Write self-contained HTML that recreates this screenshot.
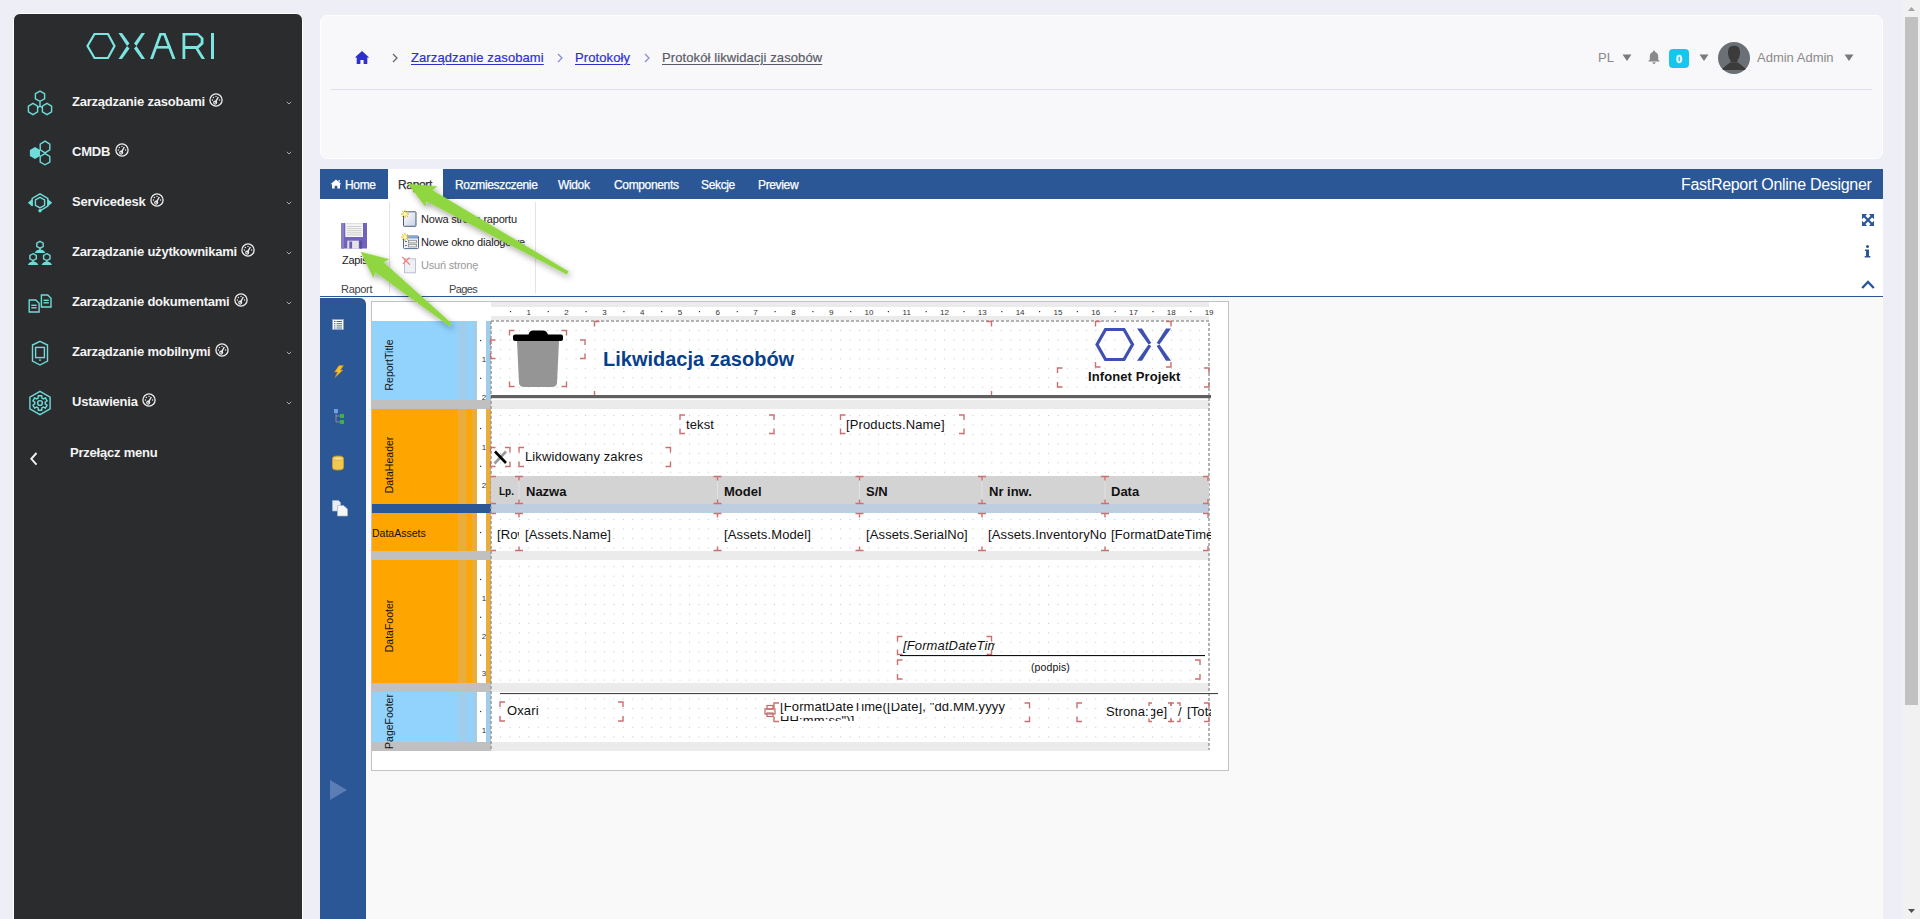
<!DOCTYPE html>
<html><head><meta charset="utf-8">
<style>
*{margin:0;padding:0;box-sizing:border-box}
html,body{width:1920px;height:919px;overflow:hidden;background:#eeeef7;font-family:"Liberation Sans",sans-serif;position:relative}
.a{position:absolute}
.t{position:absolute;white-space:nowrap;line-height:1}
#sb{left:13px;top:13px;width:290px;height:920px;background:#2b2c2e;border:1px solid #fff;border-radius:7px 7px 0 0}
.mi{position:absolute;left:72px;color:#f4f4f4;font-weight:bold;font-size:13px;letter-spacing:-0.22px}
.g{position:relative;top:-2px;margin-left:1px;vertical-align:top}
.chev{position:absolute;left:286px;width:6px;height:4px}
#hdr{left:320px;top:15px;width:1563px;height:144px;background:#f8f8fa;border:1px solid #fff;border-radius:7px}
.bc{font-size:13px;text-decoration:underline;text-underline-offset:2px;letter-spacing:0.1px;-webkit-text-stroke-width:0.2px}
.hr{font-size:13px;color:#8a8a8a}
#sbar{left:1903px;top:0;width:17px;height:919px;background:#f1f1f1}
#thumb{left:1905px;top:17px;width:13px;height:688px;background:#c1c1c1}
#tabs{left:320px;top:169px;width:1563px;height:30px;background:#2b5797}
.tab{position:absolute;top:179px;color:#fff;font-size:12px;letter-spacing:-0.35px;-webkit-text-stroke-width:0.25px}
#ribbon{left:320px;top:199px;width:1563px;height:98px;background:#fff;border-bottom:1px solid #2b5797}
.rb{position:absolute;font-size:11px;color:#222;white-space:nowrap;line-height:1}
#dbg{left:320px;top:297px;width:1563px;height:622px;background:#f9f9f9}
#vtb{left:320px;top:298px;width:46px;height:622px;background:#2b5797;border-radius:0 6px 0 0}
#page{left:371px;top:301px;width:858px;height:470px;background:#fff;border:1px solid #c8c8c8}
.rn{font-size:8px;fill:#333;font-family:"Liberation Sans",sans-serif}
.bl{font-size:10.5px;fill:#111;font-family:"Liberation Sans",sans-serif}
.brk{fill:none;stroke:#cc6f6f;stroke-width:1.4}
.rt{font-size:13px;color:#111;letter-spacing:0.12px}
.hb{top:485px;font-weight:bold;letter-spacing:0}
.dr{top:528px}
</style></head><body>

<!-- sidebar -->
<div id="sb" class="a"></div>
<!-- logo -->
<svg class="a" style="left:0;top:0" width="302" height="70" viewBox="0 0 302 70">
 <g fill="none" stroke="#7ae6e2" stroke-width="2.2">
  <polygon points="87.5,46 94.5,34 108,34 114.5,46 108,58 94.5,58"/>
 </g>
 <g fill="#7ae6e2">
  <polygon points="118.5,33 122,33 129.5,43.5 127,46 "/>
  <polygon points="118.5,59 122,59 129.5,48.5 127,46 "/>
  <polygon points="145,33 141.5,33 134,43.5 136.5,46 "/>
  <polygon points="145,59 141.5,59 134,48.5 136.5,46 "/>
  <polygon points="150,59 159.5,33 165.5,33 175.5,59 172.5,59 163.5,35.5 161.5,35.5 153,59"/>
  <rect x="155.5" y="46" width="15" height="2.6"/>
  <path d="M182.5,33 h15.5 l5.5,5 v6 l-5,4.5 l6.5,10.5 h-3.3 l-6.2,-10 h-10.2 v10 h-2.8 z M185.3,35.6 v10.3 h11.8 l3.6,-3.3 v-4.1 l-3.3,-2.9 z"/>
  <rect x="211" y="33" width="3" height="26"/>
 </g>
</svg>
<!-- menu icons --><!--ICONS--><svg class="a" style="left:0;top:80px" width="70" height="400" viewBox="0 80 70 400">
 <g fill="none" stroke="#6edcd8" stroke-width="1.4">
  <polygon points="40,91.10000000000001 44.6,93.65 44.6,98.75 40,101.3 35.4,98.75 35.4,93.65"/>
  <polygon points="33,103.4 37.6,106.2 37.6,111.8 33,114.6 28.4,111.8 28.4,106.2"/>
  <polygon points="47,103.4 51.6,106.2 51.6,111.8 47,114.6 42.4,111.8 42.4,106.2"/>
  <path d="M40,101.3 V106.2 L37.6,107.6 M40,106.2 L42.4,107.6"/>
  <polygon points="45,141.1 49.8,144.05 49.8,149.95 45,152.9 40.2,149.95 40.2,144.05"/>
  <polygon points="45,153.6 49.8,156.39999999999998 49.8,162.0 45,164.79999999999998 40.2,162.0 40.2,156.39999999999998"/>
  <polygon points="40,197.29999999999998 44.6,199.95 44.6,205.25 40,207.9 35.4,205.25 35.4,199.95"/>
  <path d="M32.2,206 V198.5 L40,193.8 L47.8,198.5 V206.2 L40,210.8"/>
  <polygon points="40,241.4 43.2,243.10000000000002 43.2,246.5 40,248.20000000000002 36.8,246.5 36.8,243.10000000000002"/>
  <polygon points="33.1,253.70000000000002 36.300000000000004,255.40000000000003 36.300000000000004,258.8 33.1,260.5 29.900000000000002,258.8 29.900000000000002,255.40000000000003"/>
  <polygon points="46.8,253.70000000000002 50.0,255.40000000000003 50.0,258.8 46.8,260.5 43.599999999999994,258.8 43.599999999999994,255.40000000000003"/>
  <path d="M29.2,300 h6.5 l3.4,3.2 v8.8 h-9.9 z"/>
  <path d="M41.4,295 h6.3 l3.3,3.2 v8.8 h-9.6 z"/>
  <line x1="31.3" y1="305.3" x2="36.6" y2="305.3"/><line x1="31.3" y1="307.8" x2="36.6" y2="307.8"/>
  <line x1="43.5" y1="300.3" x2="48.8" y2="300.3"/><line x1="43.5" y1="302.8" x2="48.8" y2="302.8"/>
  <polygon points="40,341.3 47.5,345 47.5,361 40,365 32.5,361 32.5,345"/>
  <rect x="35.6" y="347.4" width="8.8" height="10.2"/>
  <polygon points="40,391.4 50.1,397.2 50.1,408.8 40,414.6 29.9,408.8 29.9,397.2"/>
  <path d="M41.88,398.05 L41.66,395.79 L38.34,395.79 L38.12,398.05 L36.65,398.89 L34.59,397.95 L32.92,400.84 L34.77,402.15 L34.77,403.85 L32.92,405.16 L34.59,408.05 L36.65,407.11 L38.12,407.95 L38.34,410.21 L41.66,410.21 L41.88,407.95 L43.35,407.11 L45.41,408.05 L47.08,405.16 L45.23,403.85 L45.23,402.15 L47.08,400.84 L45.41,397.95 L43.35,398.89Z"/>
  <circle cx="40" cy="403" r="2.4"/>
 </g>
 <g fill="#6edcd8">
  <polygon points="35,146.9 40.1,149.95 40.1,156.05 35,159.1 29.9,156.05 29.9,149.95"/>
  <polygon points="27.8,202.8 32.2,199 32.2,206.6"/><polygon points="52.2,202.8 47.8,199 47.8,206.6"/>
  <circle cx="40" cy="210.8" r="1.7"/>
  <path d="M34.7,253 Q36,249.5 40,249.5 Q44,249.5 45.3,253 Z"/><rect x="39.3" y="248" width="1.4" height="2"/>
  <path d="M27.9,265 Q29.2,261.4 33.1,261.4 Q37,261.4 38.3,265 Z"/><rect x="32.4" y="260.3" width="1.4" height="2"/>
  <path d="M41.6,265 Q42.9,261.4 46.8,261.4 Q50.7,261.4 52,265 Z"/><rect x="46.1" y="260.3" width="1.4" height="2"/>
  <rect x="39" y="359.5" width="2" height="1.2"/>
 </g>
</svg><!--/ICONS-->
<div class="mi t" style="top:95px">Zarządzanie zasobami <svg class="g" width="14" height="14" viewBox="0 0 14 14"><circle cx="7" cy="7" r="6.1" fill="none" stroke="#eee" stroke-width="1.3"/><path d="M6.2,9.6 L9.3,4" stroke="#eee" stroke-width="1.4"/><circle cx="6.2" cy="9.6" r="1.5" fill="none" stroke="#eee" stroke-width="1.1"/><circle cx="7" cy="3.4" r=".7" fill="#eee"/><circle cx="4.4" cy="4.5" r=".7" fill="#eee"/><circle cx="3.4" cy="7" r=".7" fill="#eee"/><circle cx="10.6" cy="7" r=".7" fill="#eee"/></svg></div>
<div class="mi t" style="top:145px">CMDB <svg class="g" width="14" height="14" viewBox="0 0 14 14"><circle cx="7" cy="7" r="6.1" fill="none" stroke="#eee" stroke-width="1.3"/><path d="M6.2,9.6 L9.3,4" stroke="#eee" stroke-width="1.4"/><circle cx="6.2" cy="9.6" r="1.5" fill="none" stroke="#eee" stroke-width="1.1"/><circle cx="7" cy="3.4" r=".7" fill="#eee"/><circle cx="4.4" cy="4.5" r=".7" fill="#eee"/><circle cx="3.4" cy="7" r=".7" fill="#eee"/><circle cx="10.6" cy="7" r=".7" fill="#eee"/></svg></div>
<div class="mi t" style="top:195px">Servicedesk <svg class="g" width="14" height="14" viewBox="0 0 14 14"><circle cx="7" cy="7" r="6.1" fill="none" stroke="#eee" stroke-width="1.3"/><path d="M6.2,9.6 L9.3,4" stroke="#eee" stroke-width="1.4"/><circle cx="6.2" cy="9.6" r="1.5" fill="none" stroke="#eee" stroke-width="1.1"/><circle cx="7" cy="3.4" r=".7" fill="#eee"/><circle cx="4.4" cy="4.5" r=".7" fill="#eee"/><circle cx="3.4" cy="7" r=".7" fill="#eee"/><circle cx="10.6" cy="7" r=".7" fill="#eee"/></svg></div>
<div class="mi t" style="top:245px">Zarządzanie użytkownikami <svg class="g" width="14" height="14" viewBox="0 0 14 14"><circle cx="7" cy="7" r="6.1" fill="none" stroke="#eee" stroke-width="1.3"/><path d="M6.2,9.6 L9.3,4" stroke="#eee" stroke-width="1.4"/><circle cx="6.2" cy="9.6" r="1.5" fill="none" stroke="#eee" stroke-width="1.1"/><circle cx="7" cy="3.4" r=".7" fill="#eee"/><circle cx="4.4" cy="4.5" r=".7" fill="#eee"/><circle cx="3.4" cy="7" r=".7" fill="#eee"/><circle cx="10.6" cy="7" r=".7" fill="#eee"/></svg></div>
<div class="mi t" style="top:295px">Zarządzanie dokumentami <svg class="g" width="14" height="14" viewBox="0 0 14 14"><circle cx="7" cy="7" r="6.1" fill="none" stroke="#eee" stroke-width="1.3"/><path d="M6.2,9.6 L9.3,4" stroke="#eee" stroke-width="1.4"/><circle cx="6.2" cy="9.6" r="1.5" fill="none" stroke="#eee" stroke-width="1.1"/><circle cx="7" cy="3.4" r=".7" fill="#eee"/><circle cx="4.4" cy="4.5" r=".7" fill="#eee"/><circle cx="3.4" cy="7" r=".7" fill="#eee"/><circle cx="10.6" cy="7" r=".7" fill="#eee"/></svg></div>
<div class="mi t" style="top:345px">Zarządzanie mobilnymi <svg class="g" width="14" height="14" viewBox="0 0 14 14"><circle cx="7" cy="7" r="6.1" fill="none" stroke="#eee" stroke-width="1.3"/><path d="M6.2,9.6 L9.3,4" stroke="#eee" stroke-width="1.4"/><circle cx="6.2" cy="9.6" r="1.5" fill="none" stroke="#eee" stroke-width="1.1"/><circle cx="7" cy="3.4" r=".7" fill="#eee"/><circle cx="4.4" cy="4.5" r=".7" fill="#eee"/><circle cx="3.4" cy="7" r=".7" fill="#eee"/><circle cx="10.6" cy="7" r=".7" fill="#eee"/></svg></div>
<div class="mi t" style="top:395px">Ustawienia <svg class="g" width="14" height="14" viewBox="0 0 14 14"><circle cx="7" cy="7" r="6.1" fill="none" stroke="#eee" stroke-width="1.3"/><path d="M6.2,9.6 L9.3,4" stroke="#eee" stroke-width="1.4"/><circle cx="6.2" cy="9.6" r="1.5" fill="none" stroke="#eee" stroke-width="1.1"/><circle cx="7" cy="3.4" r=".7" fill="#eee"/><circle cx="4.4" cy="4.5" r=".7" fill="#eee"/><circle cx="3.4" cy="7" r=".7" fill="#eee"/><circle cx="10.6" cy="7" r=".7" fill="#eee"/></svg></div>
<div class="mi t" style="top:446px;left:70px">Przełącz menu</div>
<svg class="a" style="left:28px;top:450px" width="12" height="18" viewBox="0 0 12 18"><path d="M8.5,3 L3.3,8.8 L8.5,14.6" fill="none" stroke="#f4f4f4" stroke-width="1.9"/></svg>
<div id="gauges"></div>
<svg class="chev" style="top:101px" viewBox="0 0 6 4"><path d="M0.8,0.8 L3,3 L5.2,0.8" fill="none" stroke="#aaa" stroke-width="1"/></svg>
<svg class="chev" style="top:151px" viewBox="0 0 6 4"><path d="M0.8,0.8 L3,3 L5.2,0.8" fill="none" stroke="#aaa" stroke-width="1"/></svg>
<svg class="chev" style="top:201px" viewBox="0 0 6 4"><path d="M0.8,0.8 L3,3 L5.2,0.8" fill="none" stroke="#aaa" stroke-width="1"/></svg>
<svg class="chev" style="top:251px" viewBox="0 0 6 4"><path d="M0.8,0.8 L3,3 L5.2,0.8" fill="none" stroke="#aaa" stroke-width="1"/></svg>
<svg class="chev" style="top:301px" viewBox="0 0 6 4"><path d="M0.8,0.8 L3,3 L5.2,0.8" fill="none" stroke="#aaa" stroke-width="1"/></svg>
<svg class="chev" style="top:351px" viewBox="0 0 6 4"><path d="M0.8,0.8 L3,3 L5.2,0.8" fill="none" stroke="#aaa" stroke-width="1"/></svg>
<svg class="chev" style="top:401px" viewBox="0 0 6 4"><path d="M0.8,0.8 L3,3 L5.2,0.8" fill="none" stroke="#aaa" stroke-width="1"/></svg>


<!-- header card -->
<div id="hdr" class="a"></div>
<div class="a" style="left:331px;top:89px;width:1541px;height:1px;background:#dde0e8"></div>
<svg class="a" style="left:354px;top:50px" width="16" height="15" viewBox="0 0 16 15"><path d="M8,1 L15.2,7.6 L13.3,7.6 L13.3,14 L9.6,14 L9.6,10 L6.4,10 L6.4,14 L2.7,14 L2.7,7.6 L0.8,7.6 Z" fill="#2d2fcf"/></svg>
<svg class="a" style="left:391px;top:53px" width="8" height="10" viewBox="0 0 8 10"><path d="M2,1 L6,5 L2,9" fill="none" stroke="#666" stroke-width="1.3"/></svg>
<div class="t bc" style="left:411px;top:51px;color:#2d2fcf">Zarządzanie zasobami</div>
<svg class="a" style="left:556px;top:53px" width="8" height="10" viewBox="0 0 8 10"><path d="M2,1 L6,5 L2,9" fill="none" stroke="#8b8bd6" stroke-width="1.3"/></svg>
<div class="t bc" style="left:575px;top:51px;color:#2d2fcf">Protokoły</div>
<svg class="a" style="left:643px;top:53px" width="8" height="10" viewBox="0 0 8 10"><path d="M2,1 L6,5 L2,9" fill="none" stroke="#8b8bd6" stroke-width="1.3"/></svg>
<div class="t bc" style="left:662px;top:51px;color:#5a5a66">Protokół likwidacji zasobów</div>

<div class="t hr" style="left:1598px;top:51px">PL</div>
<svg class="a" style="left:1622px;top:54px" width="10" height="8" viewBox="0 0 10 8"><path d="M0.5,0.5 L9.5,0.5 L5,7 Z" fill="#7a7a7a"/></svg>
<svg class="a" style="left:1647px;top:50px" width="14" height="15" viewBox="0 0 14 15"><path d="M7,0.8 C7.8,0.8 8.2,1.3 8.2,2 C10.4,2.6 11.2,4.4 11.2,6.5 L11.2,9.5 L12.8,11.5 L1.2,11.5 L2.8,9.5 L2.8,6.5 C2.8,4.4 3.6,2.6 5.8,2 C5.8,1.3 6.2,0.8 7,0.8 Z M5.5,12.3 L8.5,12.3 C8.5,13.4 7.8,14 7,14 C6.2,14 5.5,13.4 5.5,12.3Z" fill="#8a8a8a"/></svg>
<div class="a" style="left:1669px;top:49px;width:20px;height:19px;background:#17c6ec;border-radius:4px;color:#fff;font-weight:bold;font-size:11px;text-align:center;line-height:20px;-webkit-text-stroke-width:0.3px">0</div>
<svg class="a" style="left:1699px;top:54px" width="10" height="8" viewBox="0 0 10 8"><path d="M0.5,0.5 L9.5,0.5 L5,7 Z" fill="#7a7a7a"/></svg>
<svg class="a" style="left:1718px;top:42px" width="32" height="32" viewBox="0 0 32 32"><defs><clipPath id="cc"><circle cx="16" cy="16" r="16"/></clipPath></defs><circle cx="16" cy="16" r="16" fill="#6b7077"/><g clip-path="url(#cc)" fill="#3b3b3b"><path d="M16,3.8 C20.5,3.8 22,6.5 22,10.5 C22,14 21,16.5 19.5,18 L19.5,20.5 L12.5,20.5 L12.5,18 C11,16.5 10,14 10,10.5 C10,6.5 11.5,3.8 16,3.8Z"/><path d="M2.5,28 L9.5,22.5 C11,21 12.5,20.5 13,20.5 L19,20.5 C19.5,20.5 21,21 22.5,22.5 L29.5,28 Z"/></g></svg>
<div class="t hr" style="left:1757px;top:51px">Admin Admin</div>
<svg class="a" style="left:1844px;top:54px" width="10" height="8" viewBox="0 0 10 8"><path d="M0.5,0.5 L9.5,0.5 L5,7 Z" fill="#7a7a7a"/></svg>


<!-- scrollbar -->
<div id="sbar" class="a"></div>
<div id="thumb" class="a"></div>

<!-- designer -->
<div id="tabs" class="a"></div>
<div class="a" style="left:388px;top:169px;width:55px;height:30px;background:#fff"></div>
<svg class="a" style="left:330px;top:179px" width="12" height="10" viewBox="0 0 12 10"><path d="M6,0.5 L11.5,5.3 L10,5.3 L10,9.5 L7.3,9.5 L7.3,6.8 L4.7,6.8 L4.7,9.5 L2,9.5 L2,5.3 L0.5,5.3 Z M8.5,1 h1.3 v2.3 l-1.3,-1.1z" fill="#fff"/></svg>
<div class="t tab" style="left:345px">Home</div>
<div class="t tab" style="left:398px;color:#333">Raport</div>
<div class="t tab" style="left:455px">Rozmieszczenie</div>
<div class="t tab" style="left:558px">Widok</div>
<div class="t tab" style="left:614px">Components</div>
<div class="t tab" style="left:701px">Sekcje</div>
<div class="t tab" style="left:758px">Preview</div>
<div class="t" style="left:1681px;top:177px;color:#fff;font-size:16px;letter-spacing:-0.3px">FastReport Online Designer</div>

<div id="ribbon" class="a"></div>
<!-- floppy -->
<svg class="a" style="left:340px;top:222px" width="28" height="28" viewBox="0 0 28 28">
 <path d="M1,1 h26 v25.6 h-25 l-1,-1 z" fill="#7063b9"/>
 <rect x="1" y="1" width="3" height="25.6" fill="#8a7fca"/>
 <rect x="5.3" y="1" width="17.7" height="14" fill="#f6f6f6"/>
 <rect x="5.3" y="1" width="17.7" height="1.2" fill="#dedede"/>
 <g stroke="#c8c8c8" stroke-width="0.9"><line x1="6.8" y1="4.5" x2="21.5" y2="4.5"/><line x1="6.8" y1="6.6" x2="21.5" y2="6.6"/><line x1="6.8" y1="8.7" x2="21.5" y2="8.7"/><line x1="6.8" y1="10.8" x2="21.5" y2="10.8"/><line x1="6.8" y1="12.9" x2="21.5" y2="12.9"/></g>
 <rect x="7.3" y="18.7" width="11.5" height="7.9" fill="#e4e4e8"/>
 <rect x="9.3" y="19.5" width="2.8" height="7" fill="#6a5db0"/>
 <rect x="19.5" y="18.7" width="2.6" height="7.9" fill="#5a4ea0"/>
</svg>
<div class="rb" style="left:342px;top:255px;font-size:11px;letter-spacing:-0.3px">Zapis</div>
<div class="rb" style="left:341px;top:284px;color:#444;letter-spacing:-0.3px">Raport</div>
<div class="rb" style="left:449px;top:284px;color:#444;letter-spacing:-0.6px">Pages</div>
<div class="a" style="left:389px;top:202px;width:1px;height:91px;background:#e4e4e4"></div>
<div class="a" style="left:535px;top:202px;width:1px;height:91px;background:#e4e4e4"></div>
<!-- page icons -->
<svg class="a" style="left:401px;top:210px" width="18" height="18" viewBox="0 0 18 18"><defs><linearGradient id="pg" x1="0" y1="0" x2="1" y2="1"><stop offset="0" stop-color="#ffffff"/><stop offset="1" stop-color="#c8d0e4"/></linearGradient></defs><rect x="2.5" y="1.8" width="12.5" height="14.5" rx="0.8" fill="url(#pg)" stroke="#3a4a6a" stroke-width="0.9"/><g><path d="M1.2,1.2 L6.8,6.8 M6.8,1.2 L1.2,6.8 M4,0 V8 M0,4 H8" stroke="#e8b800" stroke-width="1"/><circle cx="4" cy="4" r="2" fill="#fff6b0"/></g></svg>
<div class="rb" style="left:421px;top:214px;letter-spacing:-0.2px">Nowa strona raportu</div>
<svg class="a" style="left:401px;top:233px" width="20" height="18" viewBox="0 0 20 18"><rect x="2.5" y="3" width="15" height="12.6" rx="1" fill="#f2f2f2" stroke="#3a5a8a" stroke-width="0.9"/><rect x="3" y="3.5" width="14" height="2" fill="#7aa0dc"/><g stroke="#4a72c0" stroke-width="1"><line x1="4" y1="8.5" x2="6" y2="8.5"/><line x1="4" y1="12.5" x2="6" y2="12.5"/></g><g fill="none" stroke="#888" stroke-width="0.8"><rect x="7.5" y="7.3" width="8" height="2.6"/><rect x="7.5" y="11.3" width="8" height="2.6"/></g><g><path d="M1.2,1.2 L6.8,6.8 M6.8,1.2 L1.2,6.8 M4,0 V8 M0,4 H8" stroke="#e8b800" stroke-width="1"/><circle cx="4" cy="4" r="2" fill="#fff6b0"/></g></svg>
<div class="rb" style="left:421px;top:237px;letter-spacing:-0.2px">Nowe okno dialogowe</div>
<svg class="a" style="left:401px;top:256px" width="18" height="18" viewBox="0 0 18 18"><rect x="3.5" y="2.8" width="11" height="14" fill="#eef0f6" stroke="#b8bccc" stroke-width="0.9"/><path d="M1.2,1 L9,8.8 M8.5,1.5 L2,8" stroke="#ec8a80" stroke-width="1.3"/></svg>
<div class="rb" style="left:421px;top:260px;color:#999;letter-spacing:-0.2px">Usuń stronę</div>
<!-- right icons -->
<svg class="a" style="left:1861px;top:213px" width="14" height="14" viewBox="0 0 14 14"><g fill="#2b5797"><path d="M1,1 h5.2 L1,6.2z"/><path d="M13,1 v5.2 L7.8,1z"/><path d="M1,13 v-5.2 L6.2,13z"/><path d="M13,13 h-5.2 L13,7.8z"/></g><path d="M2.5,2.5 L11.5,11.5 M11.5,2.5 L2.5,11.5" stroke="#2b5797" stroke-width="2.2"/></svg>
<svg class="a" style="left:1864px;top:245px" width="7" height="13" viewBox="0 0 7 13"><g fill="#2b5797"><circle cx="3.5" cy="1.6" r="1.5"/><path d="M1,4.5 h4 v6.5 h1.3 v1.6 h-5.6 v-1.6 h1.3 v-4.9 h-1z"/></g></svg>
<svg class="a" style="left:1861px;top:279px" width="14" height="11" viewBox="0 0 14 11"><path d="M1.2,9 L7,3 L12.8,9" fill="none" stroke="#2b5797" stroke-width="2.4"/></svg>

<div id="dbg" class="a"></div>
<div id="vtb" class="a"></div><!--VTB-->
<svg class="a" style="left:320px;top:297px" width="46" height="520" viewBox="320 297 46 520">
 <rect x="332.5" y="319.5" width="11" height="10" fill="#fff" stroke="#8aa0c8" stroke-width="0.8"/>
 <g stroke="#33518a" stroke-width="0.9"><line x1="334" y1="321.5" x2="335.5" y2="321.5"/><line x1="336.5" y1="321.5" x2="342" y2="321.5"/><line x1="334" y1="323.7" x2="335.5" y2="323.7"/><line x1="336.5" y1="323.7" x2="342" y2="323.7"/><line x1="334" y1="325.9" x2="335.5" y2="325.9"/><line x1="336.5" y1="325.9" x2="342" y2="325.9"/><line x1="334" y1="328" x2="335.5" y2="328"/><line x1="336.5" y1="328" x2="342" y2="328"/></g>
 <path d="M339,365.5 L343.5,365.5 L340.5,370 L343,370 L335,377.5 L337.5,372 L334.5,372 Z" fill="#f5c030" stroke="#c07820" stroke-width="0.6"/>
 <rect x="334" y="409" width="4" height="4" fill="#6ea0e0"/><rect x="340" y="414" width="4" height="4" fill="#40b040"/><rect x="340" y="420" width="4" height="4" fill="#40b040"/>
 <path d="M336,413 V422 H340 M336,416 H340" fill="none" stroke="#999" stroke-width="0.8"/>
 <path d="M332.5,458.5 Q332.5,456 338,456 Q343.5,456 343.5,458.5 V467.5 Q343.5,470 338,470 Q332.5,470 332.5,467.5 Z" fill="#f0c850" stroke="#d0a020" stroke-width="0.8"/>
 <ellipse cx="338" cy="458.5" rx="5" ry="1.8" fill="#f8e090" stroke="#d0a020" stroke-width="0.6"/>
 <path d="M332.5,500.5 H338.5 L340.5,502.5 V511 H332.5 Z" fill="#e8ecf4" stroke="#aab4c8" stroke-width="0.7"/>
 <path d="M337.5,505.5 H343.5 L347.5,509 V516 H337.5 Z" fill="#f4f6fa" stroke="#aab4c8" stroke-width="0.7"/>
 <path d="M330,780 L347,790 L330,800 Z" fill="#5b7db6"/>
</svg>
<svg class="a" style="left:1903px;top:0" width="17" height="919" viewBox="0 0 17 919"><path d="M5,11 L8.5,7 L12,11 Z" fill="#a3a3a3"/><path d="M5,909 L12,909 L8.5,913 Z" fill="#505050"/></svg>
<!--/VTB-->
<!--REPORT-->
<svg class="a" style="left:366px;top:297px" width="880" height="622" viewBox="366 297 880 622">
<defs><pattern id="dots" x="500" y="330" width="9.449" height="9.449" patternUnits="userSpaceOnUse"><rect x="0" y="0" width="1" height="1" fill="#c4c4c4"/></pattern></defs>
<rect x="371.5" y="301.5" width="857" height="469" fill="#fff" stroke="#c3c3c3" stroke-width="1"/>
<rect x="491" y="302" width="718" height="5" fill="#ebebeb"/>
<rect x="491" y="316" width="718" height="4.5" fill="#ebebeb"/>
<text x="528.8" y="315" class="rn" text-anchor="middle">1</text>
<rect x="509.9" y="311" width="1.2" height="1.2" fill="#333"/>
<text x="566.6" y="315" class="rn" text-anchor="middle">2</text>
<rect x="547.7" y="311" width="1.2" height="1.2" fill="#333"/>
<text x="604.4" y="315" class="rn" text-anchor="middle">3</text>
<rect x="585.5" y="311" width="1.2" height="1.2" fill="#333"/>
<text x="642.2" y="315" class="rn" text-anchor="middle">4</text>
<rect x="623.3" y="311" width="1.2" height="1.2" fill="#333"/>
<text x="680.0" y="315" class="rn" text-anchor="middle">5</text>
<rect x="661.1" y="311" width="1.2" height="1.2" fill="#333"/>
<text x="717.8" y="315" class="rn" text-anchor="middle">6</text>
<rect x="698.9" y="311" width="1.2" height="1.2" fill="#333"/>
<text x="755.6" y="315" class="rn" text-anchor="middle">7</text>
<rect x="736.7" y="311" width="1.2" height="1.2" fill="#333"/>
<text x="793.4" y="315" class="rn" text-anchor="middle">8</text>
<rect x="774.5" y="311" width="1.2" height="1.2" fill="#333"/>
<text x="831.2" y="315" class="rn" text-anchor="middle">9</text>
<rect x="812.3" y="311" width="1.2" height="1.2" fill="#333"/>
<text x="869.0" y="315" class="rn" text-anchor="middle">10</text>
<rect x="850.1" y="311" width="1.2" height="1.2" fill="#333"/>
<text x="906.7" y="315" class="rn" text-anchor="middle">11</text>
<rect x="887.8" y="311" width="1.2" height="1.2" fill="#333"/>
<text x="944.5" y="315" class="rn" text-anchor="middle">12</text>
<rect x="925.6" y="311" width="1.2" height="1.2" fill="#333"/>
<text x="982.3" y="315" class="rn" text-anchor="middle">13</text>
<rect x="963.4" y="311" width="1.2" height="1.2" fill="#333"/>
<text x="1020.1" y="315" class="rn" text-anchor="middle">14</text>
<rect x="1001.2" y="311" width="1.2" height="1.2" fill="#333"/>
<text x="1057.9" y="315" class="rn" text-anchor="middle">15</text>
<rect x="1039.0" y="311" width="1.2" height="1.2" fill="#333"/>
<text x="1095.7" y="315" class="rn" text-anchor="middle">16</text>
<rect x="1076.8" y="311" width="1.2" height="1.2" fill="#333"/>
<text x="1133.5" y="315" class="rn" text-anchor="middle">17</text>
<rect x="1114.6" y="311" width="1.2" height="1.2" fill="#333"/>
<text x="1171.3" y="315" class="rn" text-anchor="middle">18</text>
<rect x="1152.4" y="311" width="1.2" height="1.2" fill="#333"/>
<text x="1209.1" y="315" class="rn" text-anchor="middle">19</text>
<rect x="1190.2" y="311" width="1.2" height="1.2" fill="#333"/>
<rect x="372" y="321" width="119" height="79" fill="#91d3fc"/>
<rect x="458" y="321" width="9" height="79" fill="#a0cdea"/>
<rect x="472" y="321" width="5" height="79" fill="#a0cdea"/>
<rect x="477" y="321" width="9" height="79" fill="#fff"/>
<rect x="486" y="321" width="5" height="79" fill="#a0cdea"/>
<rect x="491" y="321" width="718" height="79" fill="url(#dots)"/>
<rect x="372" y="400" width="119" height="9" fill="#c0c0c0"/>
<rect x="491" y="400" width="718" height="9" fill="#ebebeb"/>
<rect x="480" y="339.9" width="1.2" height="1.2" fill="#333"/>
<text x="484" y="361.8" class="rn" text-anchor="middle">1</text>
<rect x="480" y="377.7" width="1.2" height="1.2" fill="#333"/>
<text x="484" y="399.6" class="rn" text-anchor="middle">2</text>
<text x="0" y="0" class="bl" text-anchor="middle" transform="translate(393,365.0) rotate(-90)">ReportTitle</text>
<rect x="372" y="409" width="119" height="95" fill="#ffa500"/>
<rect x="458" y="409" width="9" height="95" fill="#e9ad3c"/>
<rect x="472" y="409" width="5" height="95" fill="#e9ad3c"/>
<rect x="477" y="409" width="9" height="95" fill="#fff"/>
<rect x="486" y="409" width="5" height="95" fill="#e9ad3c"/>
<rect x="491" y="409" width="718" height="95" fill="url(#dots)"/>
<rect x="372" y="504" width="119" height="9" fill="#c0c0c0"/>
<rect x="491" y="504" width="718" height="9" fill="#ebebeb"/>
<rect x="480" y="427.9" width="1.2" height="1.2" fill="#333"/>
<text x="484" y="449.8" class="rn" text-anchor="middle">1</text>
<rect x="480" y="465.7" width="1.2" height="1.2" fill="#333"/>
<text x="484" y="487.6" class="rn" text-anchor="middle">2</text>
<text x="0" y="0" class="bl" text-anchor="middle" transform="translate(393,465.0) rotate(-90)">DataHeader</text>
<rect x="372" y="513" width="119" height="38" fill="#ffa500"/>
<rect x="458" y="513" width="9" height="38" fill="#e9ad3c"/>
<rect x="472" y="513" width="5" height="38" fill="#e9ad3c"/>
<rect x="477" y="513" width="9" height="38" fill="#fff"/>
<rect x="486" y="513" width="5" height="38" fill="#e9ad3c"/>
<rect x="491" y="513" width="718" height="38" fill="url(#dots)"/>
<rect x="372" y="551" width="119" height="9" fill="#c0c0c0"/>
<rect x="491" y="551" width="718" height="9" fill="#ebebeb"/>
<rect x="480" y="531.9" width="1.2" height="1.2" fill="#333"/>
<text x="372" y="537.0" class="bl">DataAssets</text>
<rect x="372" y="560" width="119" height="123" fill="#ffa500"/>
<rect x="458" y="560" width="9" height="123" fill="#e9ad3c"/>
<rect x="472" y="560" width="5" height="123" fill="#e9ad3c"/>
<rect x="477" y="560" width="9" height="123" fill="#fff"/>
<rect x="486" y="560" width="5" height="123" fill="#e9ad3c"/>
<rect x="491" y="560" width="718" height="123" fill="url(#dots)"/>
<rect x="372" y="683" width="119" height="9" fill="#c0c0c0"/>
<rect x="491" y="683" width="718" height="9" fill="#ebebeb"/>
<rect x="480" y="578.9" width="1.2" height="1.2" fill="#333"/>
<text x="484" y="600.8" class="rn" text-anchor="middle">1</text>
<rect x="480" y="616.7" width="1.2" height="1.2" fill="#333"/>
<text x="484" y="638.6" class="rn" text-anchor="middle">2</text>
<rect x="480" y="654.5" width="1.2" height="1.2" fill="#333"/>
<text x="484" y="676.4" class="rn" text-anchor="middle">3</text>
<text x="0" y="0" class="bl" text-anchor="middle" transform="translate(393,626.0) rotate(-90)">DataFooter</text>
<rect x="372" y="692" width="119" height="50" fill="#91d3fc"/>
<rect x="458" y="692" width="9" height="50" fill="#a0cdea"/>
<rect x="472" y="692" width="5" height="50" fill="#a0cdea"/>
<rect x="477" y="692" width="9" height="50" fill="#fff"/>
<rect x="486" y="692" width="5" height="50" fill="#a0cdea"/>
<rect x="491" y="692" width="718" height="50" fill="url(#dots)"/>
<rect x="372" y="742" width="119" height="9" fill="#c0c0c0"/>
<rect x="491" y="742" width="718" height="9" fill="#ebebeb"/>
<rect x="480" y="710.9" width="1.2" height="1.2" fill="#333"/>
<text x="484" y="732.8" class="rn" text-anchor="middle">1</text>
<text x="0" y="0" class="bl" text-anchor="middle" transform="translate(393,721.5) rotate(-90)">PageFooter</text>
<rect x="372" y="504" width="119" height="9" fill="#2b5797"/>
<rect x="491" y="504" width="718" height="9" fill="#bfcde0"/>
<path d="M491,321 H1209 V750" fill="none" stroke="#9a9a9a" stroke-width="1.5" stroke-dasharray="3,2"/>
<path d="M491,321 V750" fill="none" stroke="#9a9a9a" stroke-width="1.5" stroke-dasharray="3,2"/>
<path d="M490.5,345 V340 H495.5 M580,340 H585 V345 M490.5,353.5 V358.5 H495.5 M580,358.5 H585 V353.5" class="brk"/>
<path d="M509.5,335.5 V330.5 H514.5 M561.5,330.5 H566.5 V335.5 M509.5,381.5 V386.5 H514.5 M561.5,386.5 H566.5 V381.5" class="brk"/>
<path d="M594.5,326.5 V321.5 H599.5 M986.5,321.5 H991.5 V326.5 M594.5,391 V396 H599.5 M986.5,396 H991.5 V391" class="brk"/>
<path d="M517,341 H559 L557,383 Q556.5,387 552,387 H524 Q519.5,387 519,383 Z" fill="#959595"/>
<rect x="513" y="334.5" width="50" height="6.5" rx="2" fill="#000"/>
<path d="M528.5,335 Q529,330.5 533,330.5 H543 Q547,330.5 548,335 Z" fill="#000"/>
<rect x="491" y="395" width="720" height="3.2" fill="#606060"/>
<polygon points="1097,344.5 1105.5,329.5 1124,329.5 1132.5,344.5 1124,359.5 1105.5,359.5" fill="none" stroke="#3f51b0" stroke-width="3.2"/>
<g fill="#3f51b0"><polygon points="1137,328.5 1142,328.5 1151.3,343 1148.5,344.5"/><polygon points="1137,360.7 1142,360.7 1151.3,346 1148.5,344.5"/><polygon points="1171,328.5 1166,328.5 1156.7,343 1159.5,344.5"/><polygon points="1171,360.7 1166,360.7 1156.7,346 1159.5,344.5"/></g>
<path d="M1095.5,326.5 V321.5 H1100.5 M1166,321.5 H1171 V326.5 M1095.5,362 V367 H1100.5 M1166,367 H1171 V362" class="brk"/>
<path d="M1057.5,373 V368 H1062.5 M1204,368 H1209 V373 M1057.5,382 V387 H1062.5 M1204,387 H1209 V382" class="brk"/>
<path d="M680,420 V415 H685 M769,415 H774 V420 M680,428.5 V433.5 H685 M769,433.5 H774 V428.5" class="brk"/>
<path d="M840.5,420 V415 H845.5 M959,415 H964 V420 M840.5,428.5 V433.5 H845.5 M959,433.5 H964 V428.5" class="brk"/>
<path d="M490.5,452.5 V447.5 H495.5 M505,447.5 H510 V452.5 M490.5,461.5 V466.5 H495.5 M505,466.5 H510 V461.5" class="brk"/>
<path d="M519,452.5 V447.5 H524 M665.5,447.5 H670.5 V452.5 M519,461.5 V466.5 H524 M665.5,466.5 H670.5 V461.5" class="brk"/>
<path d="M506,451.5 L494.5,463.5" stroke="#9a9a9a" stroke-width="2.6"/><path d="M495,451.5 L506,463" stroke="#000" stroke-width="2.6"/>
<rect x="491" y="476" width="718" height="28" fill="#d3d3d3"/>
<rect x="518.5" y="477" width="1" height="26" fill="#e2e2e2"/>
<rect x="717.0" y="477" width="1" height="26" fill="#e2e2e2"/>
<rect x="859.0" y="477" width="1" height="26" fill="#e2e2e2"/>
<rect x="981.5" y="477" width="1" height="26" fill="#e2e2e2"/>
<rect x="1104.5" y="477" width="1" height="26" fill="#e2e2e2"/>
<path d="M515,476.5 H523 M519,476.5 V480.5 M515,503.5 H523 M519,503.5 V499.5 M713.5,476.5 H721.5 M717.5,476.5 V480.5 M713.5,503.5 H721.5 M717.5,503.5 V499.5 M855.5,476.5 H863.5 M859.5,476.5 V480.5 M855.5,503.5 H863.5 M859.5,503.5 V499.5 M978,476.5 H986 M982,476.5 V480.5 M978,503.5 H986 M982,503.5 V499.5 M1101,476.5 H1109 M1105,476.5 V480.5 M1101,503.5 H1109 M1105,503.5 V499.5 " class="brk"/>
<path d="M491,476.5 H496 M491,503.5 H496 M1203,476.5 H1208 V481 M1203,503.5 H1208 V499" class="brk"/>
<path d="M515,513.5 H523 M519,513.5 V517.5 M515,550.5 H523 M519,550.5 V546.5 M713.5,513.5 H721.5 M717.5,513.5 V517.5 M713.5,550.5 H721.5 M717.5,550.5 V546.5 M855.5,513.5 H863.5 M859.5,513.5 V517.5 M855.5,550.5 H863.5 M859.5,550.5 V546.5 M978,513.5 H986 M982,513.5 V517.5 M978,550.5 H986 M982,550.5 V546.5 M1101,513.5 H1109 M1105,513.5 V517.5 M1101,550.5 H1109 M1105,550.5 V546.5 " class="brk"/>
<path d="M491,513.5 H496 M491,550.5 H496 M1203,513.5 H1208 V518 M1203,550.5 H1208 V546" class="brk"/>
<path d="M897.5,641.5 V636.5 H902.5 M986.5,636.5 H991.5 V641.5 M897.5,649.5 V654.5 H902.5 M986.5,654.5 H991.5 V649.5" class="brk"/>
<rect x="900" y="655" width="305" height="1.1" fill="#111"/>
<path d="M897.5,665 V660 H902.5 M1195,660 H1200 V665 M897.5,674 V679 H902.5 M1195,679 H1200 V674" class="brk"/>
<rect x="500" y="693" width="718" height="1.1" fill="#444"/>
<path d="M500,707 V702 H505 M618,702 H623 V707 M500,716 V721 H505 M618,721 H623 V716" class="brk"/>
<path d="M774,708 V703 H779 M1024.5,703 H1029.5 V708 M774,716.5 V721.5 H779 M1024.5,721.5 H1029.5 V716.5" class="brk"/>
<path d="M1077,708 V703 H1082 M1204,703 H1209 V708 M1077,716.5 V721.5 H1082 M1204,721.5 H1209 V716.5" class="brk"/>
<path d="M1149,706 V703 H1152 M1168,703 H1171 V706 M1149,718.5 V721.5 H1152 M1168,721.5 H1171 V718.5" class="brk"/>
<path d="M1171,706 V703 H1174 M1177,703 H1180 V706 M1171,718.5 V721.5 H1174 M1177,721.5 H1180 V718.5" class="brk"/>
<g fill="none" stroke="#c06868" stroke-width="1.2"><rect x="765" y="709" width="10" height="5"/><rect x="767" y="705.5" width="6" height="3.5"/><rect x="767" y="713" width="6" height="3.5"/></g>
</svg>
<div class="t rt" style="left:603px;top:349px;font-size:20px;font-weight:bold;color:#073f8d;letter-spacing:0">Likwidacja zasobów</div>
<div class="t rt" style="left:1088px;top:370px;font-size:13px;font-weight:bold;color:#111;letter-spacing:0.1px">Infonet Projekt</div>
<div class="a" style="left:1057px;top:385px;width:152px;height:2px;overflow:hidden"><div class="t" style="left:68px;top:0px;font-size:13px;font-weight:bold;color:#111">2024</div></div>
<div class="t rt" style="left:686px;top:418px">tekst</div>
<div class="t rt" style="left:846px;top:418px">[Products.Name]</div>
<div class="t rt" style="left:525px;top:450px">Likwidowany zakres</div>
<div class="t rt" style="left:499px;top:487px;font-size:10px;font-weight:bold;letter-spacing:0">Lp.</div>
<div class="t rt hb" style="left:526px">Nazwa</div>
<div class="t rt hb" style="left:724px">Model</div>
<div class="t rt hb" style="left:866px">S/N</div>
<div class="t rt hb" style="left:989px">Nr inw.</div>
<div class="t rt hb" style="left:1111px">Data</div>
<div class="a" style="left:497px;top:524px;width:22px;height:20px;overflow:hidden"><div class="t rt" style="left:0;top:4px">[Row#]</div></div>
<div class="t rt dr" style="left:525px">[Assets.Name]</div>
<div class="t rt dr" style="left:724px">[Assets.Model]</div>
<div class="t rt dr" style="left:866px">[Assets.SerialNo]</div>
<div class="a" style="left:988px;top:524px;width:118px;height:20px;overflow:hidden"><div class="t rt" style="left:0;top:4px">[Assets.InventoryNo]</div></div>
<div class="a" style="left:1111px;top:524px;width:100px;height:20px;overflow:hidden"><div class="t rt" style="left:0;top:4px">[FormatDateTime([Assets.Date])]</div></div>
<div class="a" style="left:903px;top:636px;width:92px;height:20px;overflow:hidden"><div class="t rt" style="left:0;top:3px;font-style:italic">[FormatDateTime([Date])]</div></div>
<div class="t rt" style="left:1031px;top:662px;font-size:10.5px">(podpis)</div>
<div class="t rt" style="left:507px;top:704px">Oxari</div>
<div class="a" style="left:780px;top:703px;width:240px;height:18px;overflow:hidden"><div class="t rt" style="left:0;top:-3px;line-height:14px;white-space:pre">[FormatDateTime([Date], "dd.MM.yyyy
HH:mm:ss")]</div></div>
<div class="t rt" style="left:1106px;top:705px">Strona:</div>
<div class="a" style="left:1151px;top:703px;width:18px;height:20px;overflow:hidden"><div class="t rt" style="left:-22px;top:2px">[Page]</div></div>
<div class="t rt" style="left:1178px;top:705px">/</div>
<div class="a" style="left:1187px;top:703px;width:24px;height:20px;overflow:hidden"><div class="t rt" style="left:0;top:2px">[TotalPages#]</div></div>
<!--/REPORT-->

<!--ARROWS--><svg class="a" style="left:0;top:0;pointer-events:none" width="1920" height="919" viewBox="0 0 1920 919"><defs><filter id="sh" x="-20%" y="-20%" width="140%" height="140%"><feDropShadow dx="2" dy="3" stdDeviation="3" flood-color="#000" flood-opacity="0.35"/></filter></defs><g fill="#90d640" stroke="#90d640" stroke-width="0.6" stroke-linejoin="round" filter="url(#sh)"><polygon points="408.5,184.3 436.7,186.5 432.2,190.2 568.3,271.4 566.7,274.2 426.1,201.1 425.2,206.3"/><polygon points="361.1,252.2 388.6,259.3 383.4,262.3 451.5,323.6 449.5,326.0 375.3,272.0 373.4,277.5"/></g></svg><!--/ARROWS-->
</body></html>
